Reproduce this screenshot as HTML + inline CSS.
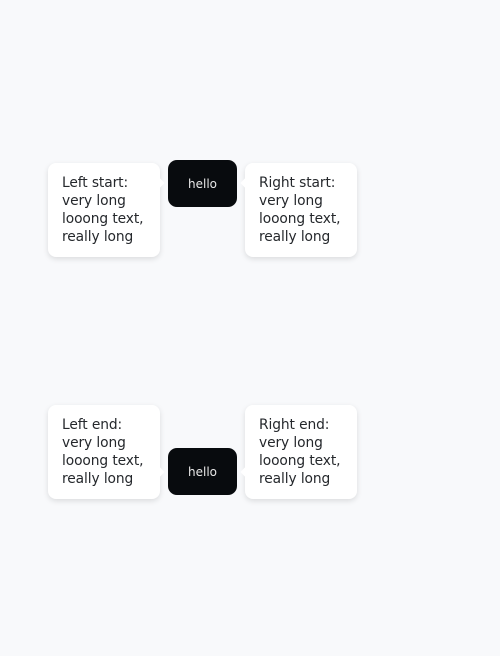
<!DOCTYPE html><html><head><style>
body{margin:0;width:500px;height:656px;background:#f8f9fb;font-family:"DejaVu Sans","Liberation Sans",sans-serif;position:relative;overflow:hidden}
.tip{position:absolute;width:112px;height:94px;box-sizing:border-box;background:#fff;border-radius:8px;box-shadow:0 2px 6px rgba(0,0,0,.12);padding:11px 0 0 14px;font-size:13.8px;line-height:18px;color:#25282c;letter-spacing:-0.1px}
.tip:after{content:"";position:absolute;width:8px;height:8px;background:#fff;transform:rotate(45deg)}
.l:after{right:-3px}.r:after{left:-3px}
.s:after{top:16px}.e:after{bottom:23px}
.btn{position:absolute;left:168px;width:69px;height:47px;background:#080b0e;border-radius:9px;color:#e8e8e8;font-size:12px;display:flex;align-items:center;justify-content:center}
</style></head><body>
<div class="tip l s" style="left:48px;top:163px">Left start:<br>very long<br>looong text,<br>really long</div>
<div class="btn" style="top:160px">hello</div>
<div class="tip r s" style="left:245px;top:163px">Right start:<br>very long<br>looong text,<br>really long</div>
<div class="tip l e" style="left:48px;top:405px">Left end:<br>very long<br>looong text,<br>really long</div>
<div class="btn" style="top:448px">hello</div>
<div class="tip r e" style="left:245px;top:405px">Right end:<br>very long<br>looong text,<br>really long</div>
</body></html>
